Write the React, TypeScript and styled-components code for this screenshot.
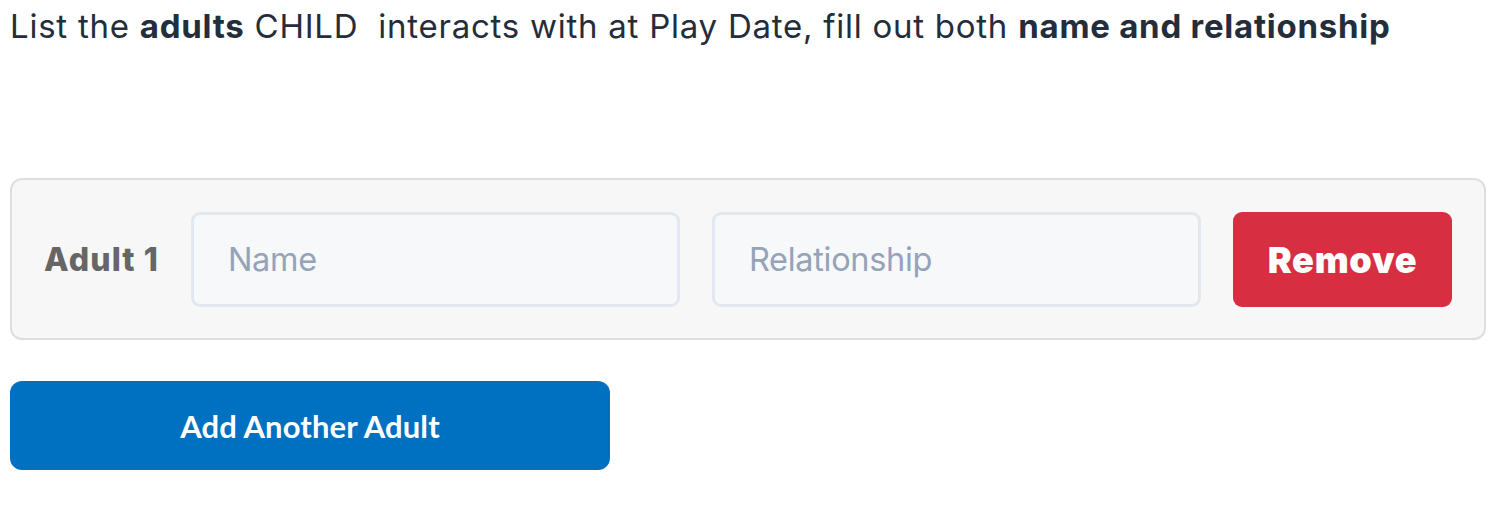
import React from "react";
import styled, { createGlobalStyle } from "styled-components";

const Global = createGlobalStyle`
  html, body { margin: 0; padding: 0; background: #ffffff; }
  body { font-family: "Inter", "Lato", sans-serif; }
  * { box-sizing: border-box; }
`;

const Page = styled.div`
  width: 1508px;
  padding: 0 22px 0 10px;
`;

const Heading = styled.p`
  margin: 0;
  padding-top: 5px;
  font-family: "Inter", sans-serif;
  font-size: 33px;
  line-height: 42px;
  color: #242d3c;
  letter-spacing: 0.75px;
  white-space: pre;
  b { font-weight: 700; }
`;

const AdultCard = styled.div`
  margin-top: 131px;
  display: flex;
  align-items: center;
  gap: 32px;
  padding: 32px 32px 31px;
  background: #f7f7f7;
  border: 2px solid #dedede;
  border-radius: 12px;
`;

const Label = styled.span`
  font-family: "Inter", sans-serif;
  font-weight: 800;
  font-size: 32px;
  color: #666666;
  letter-spacing: 1.1px;
  white-space: nowrap;
`;

const Field = styled.input`
  flex: 1 1 0;
  min-width: 0;
  height: 95px;
  padding: 0 34px;
  background: #f7f8fa;
  border: 3px solid #e2e8f0;
  border-radius: 9px;
  font-family: "Inter", sans-serif;
  font-size: 32.5px;
  color: #334155;
  outline: none;
  &::placeholder { color: #94a3b8; letter-spacing: -0.3px; }
`;

const RemoveButton = styled.button`
  flex: none;
  width: 219px;
  height: 95px;
  border: none;
  border-radius: 9px;
  background: #d72f41;
  color: #ffffff;
  font-family: "Inter", sans-serif;
  font-weight: 900;
  font-size: 36px;
  letter-spacing: 0.7px;
  cursor: pointer;
`;

const AddButton = styled.button`
  display: block;
  margin-top: 41px;
  width: 600px;
  height: 89px;
  border: none;
  border-radius: 12px;
  background: #0070c0;
  color: #ffffff;
  font-family: "Lato", sans-serif;
  font-weight: 700;
  font-size: 31px;
  letter-spacing: 0.1px;
  cursor: pointer;
`;

export default function App() {
  return (
    <Page>
      <Global />
      <Heading>
        List the <b>adults</b> CHILD  interacts with at Play Date, fill out both <b>name and relationship</b>
      </Heading>
      <AdultCard>
        <Label>Adult 1</Label>
        <Field placeholder="Name" />
        <Field placeholder="Relationship" />
        <RemoveButton>Remove</RemoveButton>
      </AdultCard>
      <AddButton>Add Another Adult</AddButton>
    </Page>
  );
}
